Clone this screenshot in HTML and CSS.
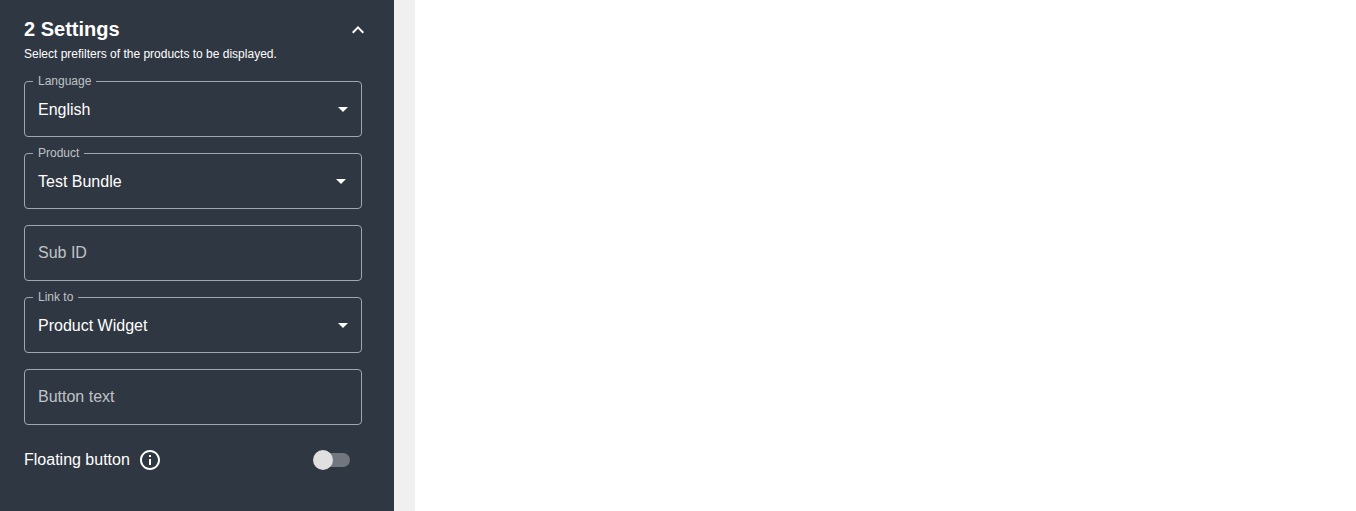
FILE: index.html
```html
<!DOCTYPE html>
<html lang="en">
<head>
    <meta charset="UTF-8">
    <title>Settings</title>
    <link rel="stylesheet" href="styles.css">
</head>
<body>

<aside class="panel">
    <div class="panel-head">
        <h2>2 Settings</h2>
        <svg class="collapse-icon" viewBox="0 0 24 24" width="24" height="24"><path d="M12 8l-6 6 1.41 1.41L12 10.83l4.59 4.58L18 14z"/></svg>
    </div>
    <p class="panel-sub">Select prefilters of the products to be displayed.</p>

    <div class="fields">
        <div class="field">
            <span class="field-label">Language</span>
            <span class="field-value">English</span>
            <svg class="caret" viewBox="0 0 24 24" width="24" height="24"><path d="M7 10l5 5 5-5z"/></svg>
        </div>
        <div class="field field-product">
            <span class="field-label">Product</span>
            <span class="field-value">Test Bundle</span>
            <svg class="caret" viewBox="0 0 24 24" width="24" height="24"><path d="M7 10l5 5 5-5z"/></svg>
        </div>
        <div class="field">
            <span class="field-placeholder">Sub ID</span>
        </div>
        <div class="field">
            <span class="field-label">Link to</span>
            <span class="field-value">Product Widget</span>
            <svg class="caret" viewBox="0 0 24 24" width="24" height="24"><path d="M7 10l5 5 5-5z"/></svg>
        </div>
        <div class="field">
            <span class="field-placeholder">Button text</span>
        </div>
    </div>

    <div class="toggle-row">
        <span class="toggle-label">Floating button</span>
        <svg class="info-icon" viewBox="0 0 24 24" width="24" height="24"><path d="M11 7h2v2h-2zm0 4h2v6h-2zm1-9C6.48 2 2 6.48 2 12s4.48 10 10 10 10-4.48 10-10S17.52 2 12 2zm0 18c-4.41 0-8-3.59-8-8s3.59-8 8-8 8 3.59 8 8-3.59 8-8 8z"/></svg>
        <div class="switch">
            <div class="switch-thumb"></div>
        </div>
    </div>
</aside>

<div class="divider"></div>
<main class="preview"></main>

</body>
</html>
```

FILE: styles.css
```css
html, body {
    height: 100%;
}
body {
    display: flex;
    margin: 0;
    overflow: hidden;
    font-family: "Liberation Sans", Arial, sans-serif;
    background: #ffffff;
    color: #ffffff;
}
.panel {
    box-sizing: border-box;
    width: 394px;
    padding: 17px 32px 0 24px;
    background: #2f3742;
}
.panel-head {
    display: flex;
    justify-content: space-between;
    align-items: center;
    height: 24px;
}
.panel-head h2 {
    margin: 0;
    font-size: 20px;
    font-weight: bold;
    line-height: 24px;
}
.collapse-icon {
    margin-right: -8px;
    margin-top: 2px;
    fill: #ffffff;
}
.panel-sub {
    margin: 6px 0 0;
    font-size: 12px;
    line-height: 14px;
}
.fields {
    display: flex;
    flex-direction: column;
    gap: 16px;
    margin-top: 20px;
}
.field {
    position: relative;
    box-sizing: border-box;
    display: flex;
    justify-content: space-between;
    align-items: center;
    height: 56px;
    padding: 0 6px 0 13px;
    border: 1px solid #a3a6ab;
    border-radius: 4px;
    font-size: 16px;
}
.field-product {
    padding-right: 8px;
}
.field-label {
    position: absolute;
    top: -8px;
    left: 8px;
    padding: 0 5px;
    background: #2f3742;
    color: #c0c3c6;
    font-size: 12px;
    line-height: 14px;
}
.field-value {
    padding-top: 1px;
}
.field-placeholder {
    color: #c0c3c6;
}
.caret {
    fill: #ffffff;
}
.toggle-row {
    display: flex;
    align-items: center;
    height: 24px;
    margin-top: 23px;
    font-size: 16px;
}
.toggle-label {
    margin-right: 8px;
}
.info-icon {
    fill: #ffffff;
}
.switch {
    position: relative;
    width: 34px;
    height: 14px;
    margin-left: auto;
    margin-right: 12px;
    border-radius: 7px;
    background: #72767e;
}
.switch-thumb {
    position: absolute;
    top: -3px;
    left: -3px;
    width: 20px;
    height: 20px;
    border-radius: 50%;
    background: #e0e0e0;
}
.divider {
    width: 21px;
    background: #f0f0f0;
}
.preview {
    flex: 1;
    background: #ffffff;
}
```
